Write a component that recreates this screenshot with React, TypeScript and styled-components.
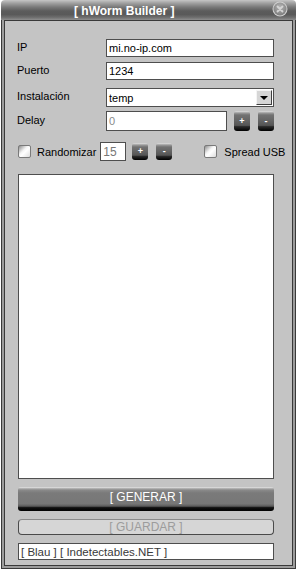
import React from "react";
import styled, { createGlobalStyle } from "styled-components";

const Global = createGlobalStyle`
  html, body { margin: 0; padding: 0; background: #ffffff; }
  body { font-family: "Liberation Sans", Arial, sans-serif; font-size: 11px; }
  * { box-sizing: border-box; }
`;

const Window = styled.div`
  margin-left: 1px;
  width: 295px;
  height: 569px;
  display: flex;
  flex-direction: column;
`;

const TitleBar = styled.div`
  height: 20px;
  flex: none;
  display: flex;
  align-items: center;
  padding-left: 73px;
  padding-right: 8px;
  border-radius: 4px 4px 0 0;
  background: linear-gradient(#c6c6c6 0%, #a2a2a2 15%, #7a7a7a 35%, #5c5c5c 55%, #595959 72%, #6c6c6c 86%, #8e8e8e 100%);
`;

const Title = styled.div`
  flex: 1;
  color: #ffffff;
  font-weight: bold;
  font-size: 12px;
  line-height: 20px;
  padding-top: 1px;
`;

const Close = styled.div`
  width: 16px;
  height: 16px;
  margin-top: -2px;
  display: flex;
`;

const Frame = styled.div`
  flex: 1;
  display: flex;
  flex-direction: column;
  background: #c4c4c4;
  padding: 19px 22px 0 16px;
  box-shadow:
    inset 1px 0 #3a3a3a, inset -1px 0 #3a3a3a, inset 0 -1px #3a3a3a,
    inset 3px 0 #9c9c9c, inset -3px 0 #9c9c9c, inset 0 -3px #9c9c9c,
    inset 4px 0 #3a3a3a, inset -4px 0 #3a3a3a, inset 0 -4px #3a3a3a,
    inset 0 1px #3a3a3a;
`;

const Row = styled.div<{ $mt?: number; $h?: number }>`
  display: flex;
  align-items: center;
  margin-top: ${(p) => p.$mt ?? 0}px;
  height: ${(p) => p.$h ?? 18}px;
`;

const Label = styled.div`
  width: 89px;
  flex: none;
  color: #000;
  font-size: 11px;
  margin-top: -3px;
`;

const Field = styled.div<{ $w?: number; $muted?: boolean }>`
  width: ${(p) => (p.$w ? `${p.$w}px` : "auto")};
  flex: ${(p) => (p.$w ? "none" : "1")};
  height: 100%;
  background: #ffffff;
  border: 1px solid #4e4e4e;
  color: ${(p) => (p.$muted ? "#8a8a8a" : "#000")};
  font-size: 11px;
  padding-left: 2px;
  display: flex;
  align-items: center;
  overflow: hidden;
`;

const SelectBox = styled(Field)`
  padding-right: 1px;
  justify-content: space-between;
`;

const Arrow = styled.div`
  width: 16px;
  height: 15px;
  background: #d6d6d6;
  border: 1px solid;
  border-color: #f4f4f4 #404040 #404040 #f4f4f4;
  display: flex;
  align-items: center;
  justify-content: center;
`;

const Tri = styled.div`
  width: 0;
  height: 0;
  border-left: 4px solid transparent;
  border-right: 4px solid transparent;
  border-top: 4px solid #000;
  margin-top: 1px;
`;

const SmallBtn = styled.div<{ $ml: number; $h?: number }>`
  width: 16px;
  height: ${(p) => p.$h ?? 20}px;
  margin-left: ${(p) => p.$ml}px;
  flex: none;
  border-radius: 3px;
  background: linear-gradient(#e4e4e4 0px, #9a9a9a 2px, #727272 4px, #666 45%, #555 72%, #2a2a2a 78%, #000 100%);
  color: #fff;
  font-size: 9px;
  font-weight: bold;
  display: flex;
  align-items: center;
  justify-content: center;
  padding-bottom: 1px;
`;

const Check = styled.div<{ $ml?: number }>`
  width: 13px;
  height: 13px;
  flex: none;
  margin-left: ${(p) => p.$ml ?? 1}px;
  border: 1px solid #7a7a7a;
  border-radius: 2px;
  background: linear-gradient(135deg, #8c8c8c 0%, #f4f4f4 40%, #ffffff 55%, #dcdcdc 100%);
`;

const CheckText = styled.div<{ $ml: number }>`
  margin-left: ${(p) => p.$ml}px;
  color: #000;
  font-size: 11px;
  white-space: nowrap;
`;

const Log = styled.div`
  margin-top: 13px;
  height: 305px;
  margin-left: 1px;
  background: #ffffff;
  border: 1px solid #4e4e4e;
`;

const BigBtn = styled.div`
  margin-top: 8px;
  margin-left: 1px;
  height: 24px;
  border-radius: 3px;
  background: linear-gradient(#f0f0f0 0px, #bdbdbd 1px, #8a8a8a 3px, #7a7a7a 6px, #777 70%, #5a5a5a 80%, #111 86%, #000 100%);
  color: #fff;
  font-size: 12px;
  display: flex;
  align-items: center;
  justify-content: center;
  padding-bottom: 4px;
`;

const LightBtn = styled.div`
  margin-top: 8px;
  margin-left: 1px;
  height: 16px;
  border-radius: 4px;
  background: #d6d6d6;
  border: 1px solid #4a4a4a;
  border-top-color: #8a8a8a;
  color: #9c9c9c;
  font-size: 12px;
  display: flex;
  align-items: center;
  justify-content: center;
`;

const Footer = styled.div`
  margin-top: 8px;
  margin-left: 1px;
  height: 17px;
  background: #ffffff;
  border: 1px solid #4e4e4e;
  color: #3a3a3a;
  font-size: 11.5px;
  padding-left: 2px;
  display: flex;
  align-items: center;
`;

const CloseIcon = () => (
  <svg width="16" height="16" viewBox="0 0 16 16">
    <defs>
      <radialGradient id="cg" cx="50%" cy="35%" r="65%">
        <stop offset="0" stopColor="#b4b4b4" />
        <stop offset="1" stopColor="#7c7c7c" />
      </radialGradient>
    </defs>
    <circle cx="8" cy="8" r="7.5" fill="#d0d0d0" />
    <circle cx="8" cy="8" r="6.5" fill="url(#cg)" />
    <path d="M5.5 5.5 L10.5 10.5 M10.5 5.5 L5.5 10.5" stroke="#d4d4d4" strokeWidth="1.8" strokeLinecap="round" />
  </svg>
);

export default function App() {
  return (
    <>
      <Global />
      <Window>
        <TitleBar>
          <Title>[ hWorm Builder ]</Title>
          <Close>
            <CloseIcon />
          </Close>
        </TitleBar>
        <Frame>
          <Row $h={18}>
            <Label>IP</Label>
            <Field>mi.no-ip.com</Field>
          </Row>
          <Row $mt={5} $h={18}>
            <Label>Puerto</Label>
            <Field>1234</Field>
          </Row>
          <Row $mt={8} $h={19}>
            <Label>Instalación</Label>
            <SelectBox>
              <span>temp</span>
              <Arrow>
                <Tri />
              </Arrow>
            </SelectBox>
          </Row>
          <Row $mt={4} $h={20}>
            <Label>Delay</Label>
            <Field $w={121} $muted>0</Field>
            <SmallBtn $ml={7}>+</SmallBtn>
            <SmallBtn $ml={8}>-</SmallBtn>
          </Row>
          <Row $mt={11} $h={19}>
            <Check />
            <CheckText $ml={6}>Randomizar</CheckText>
            <Field $w={26} $muted style={{ marginLeft: 4, color: "#777", fontSize: 12 }}>15</Field>
            <SmallBtn $ml={6} $h={17}>+</SmallBtn>
            <SmallBtn $ml={8} $h={17}>-</SmallBtn>
            <Check $ml={32} />
            <CheckText $ml={7}>Spread USB</CheckText>
          </Row>
          <Log />
          <BigBtn>[ GENERAR ]</BigBtn>
          <LightBtn>[ GUARDAR ]</LightBtn>
          <Footer>[ Blau ] [ Indetectables.NET ]</Footer>
        </Frame>
      </Window>
    </>
  );
}
